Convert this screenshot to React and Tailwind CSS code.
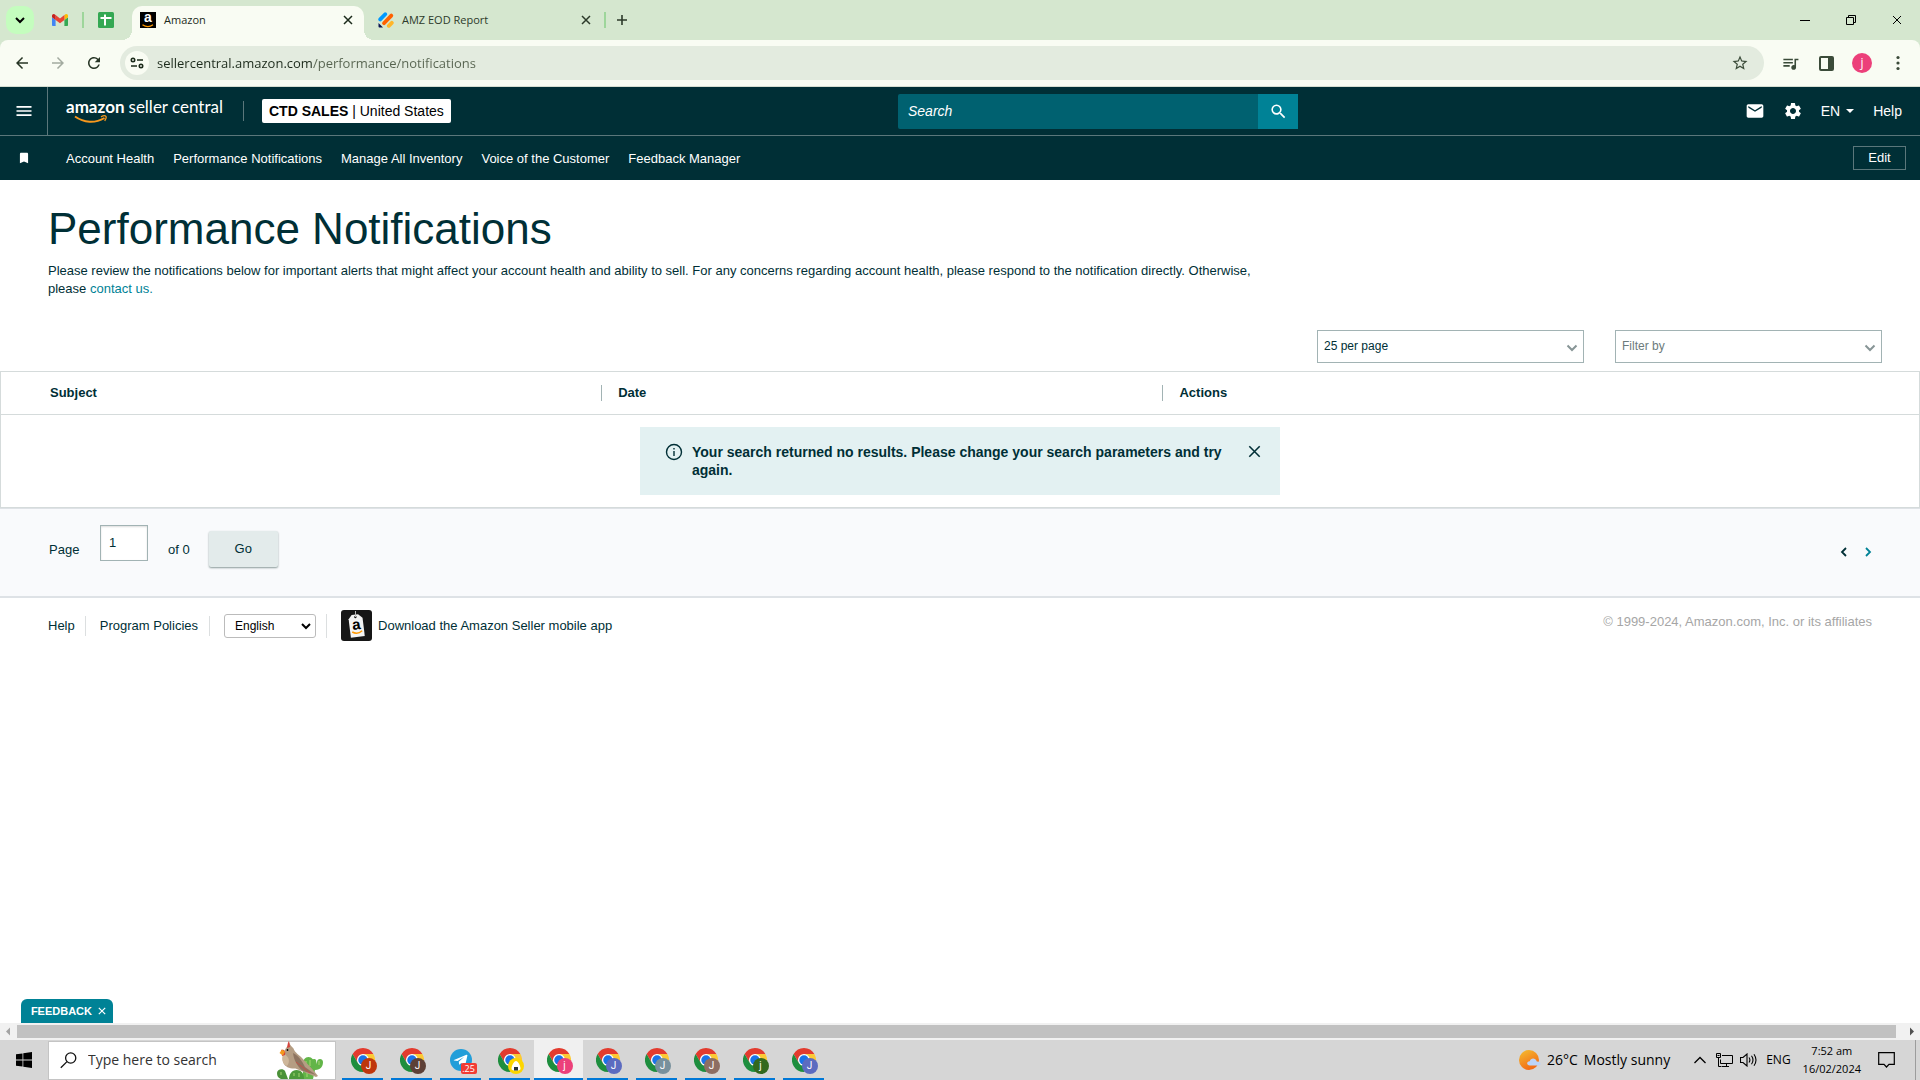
import React from "react";
import {
  MdArrowBack,
  MdArrowForward,
  MdRefresh,
  MdStarOutline,
  MdQueueMusic,
  MdEmail,
  MdSettings,
  MdSearch,
  MdMenu,
  MdBookmark,
} from "react-icons/md";

const UI = "font-['Open_Sans','Noto_Sans',sans-serif]";

function Cross({ size = 10, width = 1.5, className = "" }) {
  return (
    <svg width={size} height={size} viewBox="0 0 10 10" className={className} fill="none" stroke="currentColor" strokeWidth={width} aria-hidden="true">
      <path d="M1 1 9 9M9 1 1 9" />
    </svg>
  );
}

function Chevron({ d = "M1.5 1.5 6 6 10.5 1.5", w = 12, h = 8, width = 2, className = "" }) {
  return (
    <svg width={w} height={h} viewBox={`0 0 ${w} ${h}`} className={className} fill="none" stroke="currentColor" strokeWidth={width} aria-hidden="true">
      <path d={d} />
    </svg>
  );
}

function GmailIcon() {
  return (
    <svg width="16" height="12" viewBox="0 0 16 12" aria-hidden="true">
      <path d="M1.1 12h2.5V6L0 3.3v7.6C0 11.5.5 12 1.1 12Z" fill="#4285f4" />
      <path d="M12.4 12h2.5c.6 0 1.1-.5 1.1-1.1V3.3L12.4 6Z" fill="#34a853" />
      <path d="M12.4 1.1V6L16 3.3V1.8C16 .5 14.500-.4 13.300.4Z" fill="#fbbc04" />
      <path d="M3.600 6V1.100L8 4.400l4.400-3.300V6L8 9.300Z" fill="#ea4335" />
      <path d="M0 1.800v1.500L3.600 6V1.100L2.700.4C1.500-.4 0 .5 0 1.800Z" fill="#c5221f" />
    </svg>
  );
}

function SheetsIcon() {
  return (
    <svg width="16" height="16" viewBox="0 0 16 16" aria-hidden="true">
      <rect width="16" height="16" rx="1.500" fill="#34a853" />
      <path d="M2.500 6h11M7 2.500v11" stroke="#fff" strokeWidth="2" />
    </svg>
  );
}

function AmazonFavicon() {
  return (
    <span className="relative flex h-4 w-4 shrink-0 justify-center bg-black font-['Liberation_Sans',Arial,sans-serif] text-sm leading-[11px] font-bold text-white">
      a
      <svg width="16" height="4" viewBox="0 0 16 4" className="absolute bottom-0 left-0" fill="none" stroke="#f90" strokeWidth="1.300" aria-hidden="true">
        <path d="M2.500.8Q8 4.600 13 .8" />
      </svg>
    </span>
  );
}

function JotIcon() {
  return (
    <svg width="16" height="16" viewBox="0 0 16 16" strokeLinecap="round" strokeWidth="3.800" aria-hidden="true">
      <path d="M2.200 7.400 7.200 2.200" stroke="#0099ff" />
      <path d="M6 11.200 13.300 3.600" stroke="#ff6100" />
      <path d="M10.800 13.800 13.800 10.800" stroke="#ffb629" />
      <path d="M.5 11v3.600c0 .6.400.9.900.9H5Z" fill="#0a1551" />
    </svg>
  );
}

function TuneIcon() {
  return (
    <svg width="14" height="14" viewBox="0 0 14 14" fill="none" stroke="#1b2a1a" strokeWidth="1.600" aria-hidden="true">
      <circle cx="3" cy="4" r="1.700" />
      <path d="M7 4h6M1 10h6" />
      <circle cx="11" cy="10" r="1.700" />
    </svg>
  );
}

function TabStrip() {
  return (
    <header className="flex h-10 items-stretch bg-[#d5e7cf] text-[11px] text-[#2c3a2a]">
      <button aria-label="Search tabs" className="mt-[6px] ml-[6px] flex h-7 w-7 shrink-0 items-center justify-center rounded-[10px] bg-[#c4fdbe] text-black">
        <Chevron d="M1 1 5 5 9 1" w={10} h={7} />
      </button>
      <button aria-label="Gmail" className="ml-[18px] flex items-center"><GmailIcon /></button>
      <span className="my-auto ml-[14px] h-4 w-[2px] bg-[#9ed69b]" />
      <button aria-label="Sheets" className="ml-[14px] flex items-center"><SheetsIcon /></button>
      <div className="relative mt-[6px] ml-[18px] flex w-[232px] items-center rounded-t-[10px] bg-[#f9fcf3] pr-[11px] pb-[6px] pl-2 text-[#1c2a1b] before:absolute before:bottom-0 before:-left-[10px] before:h-[10px] before:w-[10px] before:bg-[radial-gradient(circle_at_0_0,transparent_10px,#f9fcf3_10px)] after:absolute after:-right-[10px] after:bottom-0 after:h-[10px] after:w-[10px] after:bg-[radial-gradient(circle_at_100%_0,transparent_10px,#f9fcf3_10px)]">
        <AmazonFavicon />
        <span className="ml-2 flex-1">Amazon</span>
        <button aria-label="Close Amazon tab"><Cross /></button>
      </div>
      <div className="flex w-[240px] items-center pr-[13px] pl-[14px]">
        <JotIcon />
        <span className="ml-2 flex-1">AMZ EOD Report</span>
        <button aria-label="Close AMZ EOD Report tab"><Cross /></button>
      </div>
      <span className="my-auto h-4 w-[2px] bg-[#9ed69b]" />
      <button aria-label="New tab" className="ml-[10px]">
        <svg width="12" height="12" viewBox="0 0 12 12" stroke="#2c3a2a" strokeWidth="1.600" aria-hidden="true"><path d="M6 1v10M1 6h10" /></svg>
      </button>
      <div className="ml-auto flex items-center gap-9 pr-[18px] text-black">
        <button aria-label="Minimize"><svg width="10" height="10" viewBox="0 0 10 10" stroke="currentColor" aria-hidden="true"><path d="M0 5.500h10" /></svg></button>
        <button aria-label="Restore">
          <svg width="10" height="10" viewBox="0 0 10 10" stroke="currentColor" fill="none" aria-hidden="true"><path d="M.5 2.500h7v7h-7ZM2.500 2.500v-2h7v7h-2" /></svg>
        </button>
        <button aria-label="Close window"><Cross width={1} /></button>
      </div>
    </header>
  );
}

function Toolbar() {
  return (
    <div className="bg-[#d5e7cf]">
      <div className="flex h-[47px] items-center rounded-t-lg border-b border-[#d5ddd0] bg-[#f9fcf3] pr-[18px] pl-[13px] text-[#3b4b39]">
        <button aria-label="Back"><MdArrowBack size={18} color="#273525" /></button>
        <button aria-label="Forward" className="ml-[18px]"><MdArrowForward size={18} color="#a3aba0" /></button>
        <button aria-label="Reload" className="ml-[18px]"><MdRefresh size={18} color="#273525" /></button>
        <div className="ml-[17px] flex h-[34px] flex-1 items-center rounded-full bg-[#e3ebdf] pr-[15px] pl-[5px]">
          <button aria-label="Site information" className="flex h-6 w-6 items-center justify-center rounded-full bg-[#f9fcf3]"><TuneIcon /></button>
          <input
            aria-label="Address"
            defaultValue="sellercentral.amazon.com/performance/notifications"
            className="ml-2 block h-6 min-w-0 flex-1 bg-[linear-gradient(90deg,#1c2a1b_156px,#56634f_156px)] bg-clip-text text-[13px] text-transparent outline-none"
          />
          <button aria-label="Bookmark this page"><MdStarOutline size={18} /></button>
        </div>
        <button aria-label="Media controls" className="ml-[17px]"><MdQueueMusic size={19} /></button>
        <button aria-label="Side panel" className="ml-[19px]">
          <svg width="15" height="15" viewBox="0 0 15 15" aria-hidden="true">
            <rect x="1" y="1" width="13" height="13" rx="1" fill="none" stroke="#3b4b39" strokeWidth="2" />
            <path d="M9 1h5v13H9Z" fill="#3b4b39" />
          </svg>
        </button>
        <button aria-label="Profile" className="ml-[18px] flex h-5 w-5 items-center justify-center rounded-full bg-[#ec407a] text-xs leading-none text-white">j</button>
        <button aria-label="Browser menu" className="ml-[22px]">
          <svg width="8" height="16" viewBox="0 0 8 16" fill="#3b4b39" aria-hidden="true"><circle cx="4" cy="2.500" r="1.600" /><circle cx="4" cy="8" r="1.600" /><circle cx="4" cy="13.500" r="1.600" /></svg>
        </button>
      </div>
    </div>
  );
}

const navLinks = ["Account Health", "Performance Notifications", "Manage All Inventory", "Voice of the Customer", "Feedback Manager"];

function SellerNav() {
  return (
    <nav className="bg-[#002f36] text-white">
      <div className="grid h-[49px] grid-cols-[898fr_400px_622fr] items-center border-b border-[#5b777b]">
        <div className="flex h-full items-center">
          <button aria-label="Menu" className="flex h-full w-12 items-center justify-center border-r border-[#5b777b]"><MdMenu size={20} /></button>
          <a href="#home" className="relative ml-[18px] flex h-7 w-[160px] items-start font-['Lato',sans-serif] text-[17px] leading-5 whitespace-nowrap">
            <b>amazon</b>
            <span className="ml-1">seller central</span>
            <svg width="34" height="10" viewBox="0 0 34 10" className="absolute bottom-0 left-2" fill="none" stroke="#f7981d" aria-hidden="true">
              <path d="M1 1.500C10 8 21 8.500 30.500 3" strokeWidth="1.900" />
              <path d="M27 1.800c2-1 4.300-1.200 4.900-.5s0 2.700-1.200 4.500" strokeWidth="1.300" />
            </svg>
          </a>
          <span className="ml-[17px] h-5 w-px bg-[#5b777b]" />
          <button className="ml-[18px] h-6 rounded-[2px] bg-white px-[7px] text-sm leading-6 whitespace-nowrap text-black"><b>CTD SALES</b> | United States</button>
        </div>
        <form className="flex h-[35px]" onSubmit={(e) => e.preventDefault()}>
          <input aria-label="Search" placeholder="Search" className="min-w-0 flex-1 rounded-l-[2px] bg-[#006170] px-[10px] text-sm italic outline-none placeholder:text-white" />
          <button aria-label="Submit search" className="flex w-10 items-center justify-center bg-[#008296]"><MdSearch size={19} /></button>
        </form>
        <div className="flex items-center justify-end pr-[18px] text-sm">
          <button aria-label="Messages"><MdEmail size={20} /></button>
          <button aria-label="Settings" className="ml-[18px]"><MdSettings size={20} /></button>
          <button className="ml-[18px] flex items-center gap-[6px]">EN
            <svg width="8" height="4" viewBox="0 0 8 4" fill="currentColor" aria-hidden="true"><path d="M0 0h8L4 4Z" /></svg>
          </button>
          <a href="#help" className="ml-[19px]">Help</a>
        </div>
      </div>
      <div className="flex h-11 items-center pr-[14px] text-[13px]">
        <button aria-label="Favorites" className="flex w-12 justify-center"><MdBookmark size={14} /></button>
        <div className="ml-[18px] flex gap-[19px] pt-[2px]">
          {navLinks.map((l) => <a key={l} href="#nav">{l}</a>)}
        </div>
        <button className="ml-auto h-6 w-[53px] border border-[#5b777b]">Edit</button>
      </div>
    </nav>
  );
}

function Filter({ label, value, tone }) {
  return (
    <div className="relative w-[267px]">
      <select aria-label={label} className={`h-[33px] w-full appearance-none border border-[#a2b3b4] bg-white pr-8 pb-[2px] pl-[6px] text-xs ${tone}`}>
        <option>{value}</option>
      </select>
      <Chevron className="pointer-events-none absolute top-[14px] right-[6px] text-[#879596]" />
    </div>
  );
}

function NotificationTable() {
  return (
    <table className="w-full table-fixed border border-[#d5dbdb] text-[13px]">
      <colgroup>
        <col className="w-[31.3%]" />
        <col className="w-[29.25%]" />
        <col />
      </colgroup>
      <thead>
        <tr className="h-[43px] border-b border-[#d5dbdb] text-left">
          <th className="pl-[49px]">Subject</th>
          <th><span className="block border-l border-[#a2b3b4] pl-4 leading-4">Date</span></th>
          <th><span className="block border-l border-[#a2b3b4] pl-4 leading-4">Actions</span></th>
        </tr>
      </thead>
      <tbody>
        <tr>
          <td colSpan={3} className="py-3">
            <div role="status" className="mx-auto flex h-[68px] w-[640px] items-start bg-[#e3f1f2] pt-4 pr-[19px] pl-[25px] text-sm leading-[18px] font-bold">
              <svg width="18" height="18" viewBox="0 0 18 18" className="shrink-0" fill="none" stroke="currentColor" strokeWidth="1.400" aria-hidden="true">
                <circle cx="9" cy="9" r="7.500" /><path d="M9 8v5M9 5v1.500" />
              </svg>
              <p className="ml-[9px] flex-1">Your search returned no results. Please change your search parameters and try again.</p>
              <button aria-label="Dismiss" className="mt-[2px] ml-5"><Cross size={13} width={1.200} /></button>
            </div>
          </td>
        </tr>
      </tbody>
    </table>
  );
}

function Pagination() {
  return (
    <div className="flex h-[90px] items-start border-b-2 border-[#dee2e6] bg-[#f9fafc] px-[49px] pt-[17px] text-[13px] shadow-[inset_0_1px_0_#dee2e6]">
      <label htmlFor="page" className="mt-[15px] w-[51px] leading-5">Page</label>
      <input id="page" defaultValue="1" className="h-9 w-12 border border-[#a2b3b4] bg-white px-2 pb-[2px] shadow-[inset_0_1px_2px_#ddd]" />
      <span className="mt-[15px] ml-5 leading-5">of 0</span>
      <button className="mt-[6px] ml-[19px] h-9 w-[69px] rounded-[2px] bg-[#e3ebeb] shadow-[0_1px_2px_#8a9a9a]">Go</button>
      <div className="mt-[22px] -mr-px ml-auto flex gap-[18px]">
        <button aria-label="Previous page"><Chevron w={7} h={10} d="M6 1 2 5 6 9" width={1.800} /></button>
        <button aria-label="Next page" className="text-[#008296]"><Chevron w={7} h={10} d="M1 1 5 5 1 9" width={1.800} /></button>
      </div>
    </div>
  );
}

function Footer() {
  return (
    <footer className="flex items-start justify-between pt-3 pr-12 pl-12 text-[13px]">
      <div className="flex h-[31px] items-center">
        <a href="#help">Help</a>
        <span className="ml-[10px] h-5 w-px bg-[#dcdfe0]" />
        <a href="#policies" className="ml-[14px]">Program Policies</a>
        <span className="ml-[11px] h-5 w-px bg-[#dcdfe0]" />
        <div className="relative ml-[14px] text-black">
          <select aria-label="Language" className="h-6 w-[92px] appearance-none rounded-[3px] border border-[#bbb] bg-white pl-[10px] text-xs">
            <option>English</option>
          </select>
          <Chevron d="M1 1 5 5 9 1" w={10} h={7} className="pointer-events-none absolute top-[9px] right-[5px]" />
        </div>
        <span className="ml-[10px] h-6 w-px bg-[#dcdfe0]" />
        <a href="#app" className="ml-[14px] flex items-center gap-[6px]">
          <svg width="31" height="31" viewBox="0 0 31 31" aria-hidden="true">
            <rect width="31" height="31" rx="3" fill="#161616" />
            <g transform="rotate(-7 15 16)">
              <path d="M8.500 8.500 12 4.500h6.500L22.500 8.500V27h-14Z" fill="#f4f4f4" />
              <circle cx="15.500" cy="7" r="1.200" fill="#161616" />
              <text x="15.500" y="19.500" textAnchor="middle" fontFamily="Liberation Sans" fontWeight="bold" fontSize="15">a</text>
              <path d="M10.500 21.500q5 3.500 10 0" fill="none" stroke="#f90" strokeWidth="1.500" />
            </g>
            <path d="M14.500 7V1" stroke="#bbb" />
          </svg>
          Download the Amazon Seller mobile app
        </a>
      </div>
      <p className="mt-[2px] leading-5 text-[#a6a6a6]">© 1999-2024, Amazon.com, Inc. or its affiliates</p>
    </footer>
  );
}

function ChromeLogo() {
  return (
    <svg width="24" height="24" viewBox="0 0 48 48" aria-hidden="true">
      <circle cx="24" cy="24" r="12" fill="#fff" />
      <path d="M24 12H44.781a23.994 23.994 0 0 0-41.564.003L13.608 30l.009-.002A11.985 11.985 0 0 1 24 12Z" fill="#e33b2e" />
      <path d="M34.391 30.003 24.001 48A23.994 23.994 0 0 0 44.780 12.003H23.999l-.003.009a11.985 11.985 0 0 1 10.395 17.991Z" fill="#fcc934" />
      <path d="M13.609 30.003 3.218 12.006A23.994 23.994 0 0 0 24.003 48l10.390-17.997-.007-.007a11.985 11.985 0 0 1-20.777.007Z" fill="#1e8e3e" />
      <circle cx="24" cy="24" r="9.500" fill="#1a73e8" />
    </svg>
  );
}

function TelegramLogo() {
  return (
    <svg width="22" height="22" viewBox="0 0 22 22" aria-hidden="true">
      <circle cx="11" cy="11" r="11" fill="#229ed9" />
      <path d="M4 11 16.500 5.800c.6-.2 1 .1.900.8L15.300 16c-.1.600-.5.700-1 .4l-3.100-2.300-1.600 1.500c-.3.200-.5.100-.5-.3l-.3-2.600 5.400-4.900-6.700 4.300L4 11.600c-.4-.2-.4-.4 0-.6Z" fill="#fff" />
    </svg>
  );
}

const apps = [
  { letter: "J", color: "#bf360c" },
  { letter: "J", color: "#5d4037" },
  { telegram: true },
  { rice: true, color: "#fdd600" },
  { letter: "j", color: "#ec407a", active: true },
  { letter: "J", color: "#5c6bc0" },
  { letter: "J", color: "#78909c" },
  { letter: "J", color: "#8d6e63" },
  { letter: "j", color: "#33691e" },
  { letter: "J", color: "#5c6bc0" },
];

function TaskbarApp({ app }) {
  return (
    <button
      aria-label={app.telegram ? "Telegram" : "Chrome"}
      className={`relative flex h-full w-[49px] items-center justify-center after:absolute after:bottom-0 after:h-[2px] after:bg-[#0078d7] ${app.active ? "bg-[#f0f0f0] after:inset-x-0" : "after:inset-x-1"}`}
    >
      <span className="relative">
        {app.telegram ? <TelegramLogo /> : <ChromeLogo />}
        {app.telegram ? (
          <span className="absolute -right-[5px] -bottom-[3px] h-[11px] w-4 rounded-[2px] bg-[#f23c34] text-center text-[9px] leading-[11px] text-white">.25</span>
        ) : (
          <span className="absolute -right-[2px] -bottom-[2px] flex h-4 w-4 items-center justify-center rounded-full font-['Roboto',sans-serif] text-[10px] leading-none text-white" style={{ backgroundColor: app.color }}>
            {app.rice ? (
              <svg width="12" height="12" viewBox="0 0 12 12" aria-hidden="true">
                <path d="M6 1c2 0 4.500 5 4.500 7.500 0 1.500-1 2-4.500 2s-4.500-.5-4.500-2C1.500 6 4 1 6 1Z" fill="#fff" />
                <path d="M4 7h4v3.500H4Z" fill="#263238" />
              </svg>
            ) : app.letter}
          </span>
        )}
      </span>
    </button>
  );
}

function Bird() {
  return (
    <svg width="48" height="38" viewBox="0 0 48 38" aria-hidden="true">
      <g fill="#62b548">
        <path d="M27 38V23c0-4 2-7 5.500-7S38 19 38 23v1c2 0 3-1 3-3 0-4 6-4 6 0 0 4-2 8-8 8l-2 9Z" />
        <path d="M35 20c0-2 4-3 5-1l1 5-4 2Z" />
        <path d="M13 38c0-5 3-9 7.500-9s7.500 3 7.500 9Z" fill="#4d9a3a" />
        <path d="M1 32c0-4 6-5 8-2l3 8H5c-3-1-4-3-4-6Z" fill="#4a9138" />
      </g>
      <path d="M30 20v4M34 19v6M31 32v4M43 20v4M5 31v3M18 32v3M23 32v4" stroke="#a6d673" />
      <path d="M13 1c-.5 4-3 5-4.500 9-.8 4-3 7-1 12 1.500 4 7 6 12 5.500L40 36l2-1-4-5-12-13c-3-3.500-7-5-8.500-9.500C16.500 6 15 6 13 1Z" fill="#b59d83" />
      <path d="M17 12c5 2 9 8 12 14l11 8-13-4c-5-4-9-10-10-18Z" fill="#8e7460" />
      <path d="M7 12c-1.500 6-1 11 4 13 3-4 3-9-4-13Z" fill="#ceb79a" />
      <path d="M13 0c-2 3-1 4-2 7l3-1ZM5 9c3-1 5 1 4 5l-3 1Z" fill="#d9413b" />
      <path d="M3.500 12 6 8.500l3 2-2 4Z" fill="#f39a1e" />
      <circle cx="11.500" cy="9" r=".9" />
      <path d="M20 21 34 32" stroke="#c25349" />
    </svg>
  );
}

function Taskbar() {
  return (
    <footer className={`flex h-10 items-center bg-[#d6d6d6] text-black ${UI}`}>
      <button aria-label="Start" className="flex h-full w-12 items-center justify-center">
        <svg width="16" height="16" viewBox="0 0 16 16" aria-hidden="true"><path d="M0 2.300 6.500 1.400V7.600H0ZM7.300 1.300 16 0v7.600H7.300ZM0 8.400h6.500v6.200L0 13.700ZM7.300 8.400H16V16L7.300 14.700Z" /></svg>
      </button>
      <div className="flex h-[39px] w-[288px] items-center border border-[#c4c4c4] bg-white px-[11px]">
        <svg width="17" height="17" viewBox="0 0 17 17" fill="none" stroke="#111" strokeWidth="1.300" aria-hidden="true"><circle cx="10.700" cy="6" r="5.100" /><path d="M7 9.600.8 15.800" /></svg>
        <input aria-label="Type here to search" placeholder="Type here to search" className="ml-[11px] min-w-0 flex-1 bg-transparent text-sm outline-none placeholder:text-[#333]" />
        <Bird />
      </div>
      <div className="ml-[2px] flex h-full">
        {apps.map((a, i) => <TaskbarApp key={i} app={a} />)}
      </div>
      <div className="ml-auto flex h-full items-center text-sm whitespace-nowrap">
        <button className="flex items-center">
          <svg width="22" height="20" viewBox="0 0 22 20" aria-hidden="true">
            <defs><linearGradient id="sun" x1="0" y1="0" x2="0.500" y2="1"><stop stopColor="#f5bf31" /><stop offset="1" stopColor="#f26a15" /></linearGradient></defs>
            <circle cx="10" cy="10" r="10" fill="url(#sun)" />
            <path d="M11 15.500c-4 0-3.500-4.500-.2-4.200.7-3.600 6-3.700 7 .2 4.500-.2 4.800 4 1.500 4Z" fill="#bcd3f7" />
          </svg>
          <span className="ml-[6px]">26°C</span>
          <span className="ml-[6px]">Mostly sunny</span>
        </button>
        <button aria-label="Show hidden icons" className="ml-6"><Chevron w={12} h={8} d="M.5 7 6 1.500 11.500 7" width={1.300} /></button>
        <button aria-label="Network" className="ml-[10px]">
          <svg width="17" height="14" viewBox="0 0 17 14" fill="none" stroke="currentColor" aria-hidden="true"><path d="M6 2.500h10.500v8H4.500v-4M10.500 10.500v3M6 13.500h7M.5.500h4v4h-4ZM2.500 4.500v9h3" /><path d="M1.500 2.500h2" /></svg>
        </button>
        <button aria-label="Volume" className="ml-[7px]">
          <svg width="17" height="14" viewBox="0 0 17 14" fill="none" stroke="currentColor" strokeWidth="1.100" aria-hidden="true"><path d="M.5 4.500H3L7 1v12L3 9.500H.5ZM9 4.500q1.800 2.500 0 5M11.500 2.800q3 4.200 0 8.400M14 1.200q4 5.800 0 11.600" /></svg>
        </button>
        <span className="ml-[9px] text-xs">ENG</span>
        <button className="ml-3 text-center text-[11px] leading-[18px]"><span className="block">7:52 am</span><span className="block">16/02/2024</span></button>
        <button aria-label="Notifications" className="ml-[17px]">
          <svg width="17" height="16" viewBox="0 0 17 16" fill="none" stroke="currentColor" strokeWidth="1.200" aria-hidden="true"><path d="M.7.700h15.600v11.600H11L8.500 15 6 12.300H.7Z" /></svg>
        </button>
        <span className="ml-5 h-full w-[5px] border-l border-[#9c9c9c]" />
      </div>
    </footer>
  );
}

export default function App() {
  return (
    <div className="flex min-h-screen flex-col bg-white font-['Liberation_Sans',Arial,sans-serif] text-[#002f36]">
      <div className={UI}>
        <TabStrip />
        <Toolbar />
      </div>
      <SellerNav />
      <main>
        <div className="px-12 pt-[21px]">
          <h1 className="text-[44px] leading-[56px]">Performance Notifications</h1>
          <p className="mt-[5px] max-w-[1224px] text-[13px] leading-[18px]">
            Please review the notifications below for important alerts that might affect your account health and ability to sell. For any concerns regarding account health, please respond to the notification directly. Otherwise, please <a href="#contact" className="text-[#008296]">contact us.</a>
          </p>
        </div>
        <div className="mt-8 mb-2 flex justify-end gap-[31px] pr-[38px]">
          <Filter label="Results per page" value="25 per page" tone="text-[#002f36]" />
          <Filter label="Filter by" value="Filter by" tone="text-[#6c7b7c]" />
        </div>
        <NotificationTable />
        <Pagination />
      </main>
      <Footer />
      <div className="mt-auto">
        <button className="ml-[21px] flex h-6 w-[92px] items-center justify-end gap-[6px] rounded-t-md bg-[#008296] pr-[7px] text-[11px] font-bold text-white">
          FEEDBACK <Cross size={8} />
        </button>
        <div className="flex h-[17px] items-center bg-[#f1f1f1]">
          <svg width="17" height="9" viewBox="0 0 17 9" fill="#a3a3a3" aria-hidden="true"><path d="M10 .5v8l-4-4Z" /></svg>
          <div className="h-[13px] flex-1 bg-[#c1c1c1]" />
          <svg width="24" height="9" viewBox="0 0 24 9" fill="#505050" aria-hidden="true"><path d="M14 .5v8l4-4Z" /></svg>
        </div>
        <Taskbar />
      </div>
    </div>
  );
}
